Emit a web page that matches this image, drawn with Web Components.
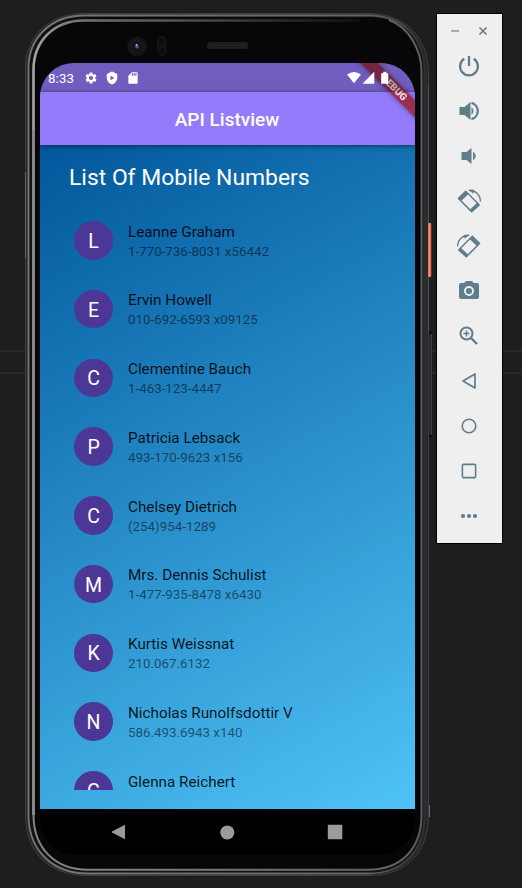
<!DOCTYPE html>
<html lang="en">
<head>
<meta charset="utf-8">
<title>API Listview</title>
<style>
html,body{margin:0;height:100%;overflow:hidden;background:#1e1e1e;font-family:Roboto,"Noto Sans",sans-serif}
</style>
</head>
<body>
<emulator-desktop>
  <phone-device>
    <status-bar></status-bar>
    <app-bar>API Listview</app-bar>
    <contact-list heading="List Of Mobile Numbers">
      <contact-tile name="Leanne Graham" phone="1-770-736-8031 x56442"></contact-tile>
      <contact-tile name="Ervin Howell" phone="010-692-6593 x09125"></contact-tile>
      <contact-tile name="Clementine Bauch" phone="1-463-123-4447"></contact-tile>
      <contact-tile name="Patricia Lebsack" phone="493-170-9623 x156"></contact-tile>
      <contact-tile name="Chelsey Dietrich" phone="(254)954-1289"></contact-tile>
      <contact-tile name="Mrs. Dennis Schulist" phone="1-477-935-8478 x6430"></contact-tile>
      <contact-tile name="Kurtis Weissnat" phone="210.067.6132"></contact-tile>
      <contact-tile name="Nicholas Runolfsdottir V" phone="586.493.6943 x140"></contact-tile>
      <contact-tile name="Glenna Reichert" phone=""></contact-tile>
    </contact-list>
    <nav-bar></nav-bar>
    <debug-banner slot="banner">DEBUG</debug-banner>
  </phone-device>
  <emulator-toolbar></emulator-toolbar>
</emulator-desktop>
<script>
const define = (tag, render) => customElements.define(tag, class extends HTMLElement {
  constructor(){ super(); this.attachShadow({mode:'open'}); }
  connectedCallback(){ this.shadowRoot.innerHTML = render(this); }
});

define('emulator-desktop', () => `
<style>
:host{display:flex;align-items:flex-start;box-sizing:border-box;width:522px;height:888px;padding:13px 0 0 25px;gap:5px;
background:linear-gradient(#292929,#292929) 0 350px/100% 2px no-repeat,linear-gradient(#292929,#292929) 0 372px/100% 2px no-repeat,#1e1e1e}
</style><slot></slot>`);

define('phone-device', () => `
<style>
:host{display:block;position:relative;width:406px;height:864px;box-sizing:border-box;padding:50px 16px 0 15px;flex:none}
.frame{position:absolute;left:0;top:0;width:408px;height:864px}
.screen{position:relative;display:flex;flex-direction:column;width:375px;height:792px;border-radius:34px 34px 36px 36px;overflow:hidden;background:linear-gradient(#947bfb 60px,#000 60px)}
</style>
<svg class="frame" viewBox="25 13 408 864">
<defs>
<linearGradient id="m" x1="0" y1="0" x2="1" y2="0"><stop offset="0" stop-color="#858585"/><stop offset=".5" stop-color="#777"/><stop offset="1" stop-color="#5c5c5e"/></linearGradient>
<linearGradient id="e" x1="0" y1="0" x2="1" y2="0"><stop offset="0" stop-color="#77757b"/><stop offset=".85" stop-color="#66646a"/><stop offset="1" stop-color="#303033"/></linearGradient>
<linearGradient id="t" x1="0" y1="0" x2="1" y2="0"><stop offset="0" stop-color="#a5a5a0"/><stop offset=".12" stop-color="#777"/><stop offset=".9" stop-color="#1c1c1c"/><stop offset="1" stop-color="#111"/></linearGradient>
<linearGradient id="o" x1="0" y1="0" x2="1" y2="0"><stop offset="0" stop-color="#e96f52"/><stop offset=".5" stop-color="#f58b70"/><stop offset="1" stop-color="#c75a43"/></linearGradient>
<radialGradient id="lens"><stop offset="0" stop-color="#7884b5"/><stop offset=".3" stop-color="#252b46"/><stop offset=".55" stop-color="#0d0d10"/><stop offset="1" stop-color="#1b1b1b"/></radialGradient>
</defs>
<path d="M427 331h5v106h-5z" fill="#282828"/><path d="M428 331h4v3h-4zM428 434h4v3h-4z" fill="#111"/><path d="M431.500 334v101" stroke="#404040"/>
<path d="M83 13.500H370C407 14 428.500 39 428.500 73V816C428.500 851 407 875.500 370 875.500H87C49 875.500 25.500 852 25.500 816V67C25.500 37 49 13.500 83 13.500Z" fill="#272727" stroke="#3d3d3d"/>
<path d="M84 15.500H370C405 16 424.500 39 424.500 73V815C424.500 849 405 873.500 368 873.500H88C51 873.500 28.500 849 28.500 815V68C28.500 38 51 15.500 84 15.500Z" fill="#121212" stroke="url(#e)" stroke-width="1.800"/>
<path d="M84 17.500H369C403 18 421.500 40 421.500 72V815C421.500 848 403 870 367 870H88C53 870 33 848 33 815V69C33 40 54 20 84 20H369C401 20 421.500 40 421.500 72" fill="#07070a"/>
<path d="M33.500 815V70C33.500 41 54 20.500 84 20.500H360" fill="none" stroke="url(#t)" stroke-width="2.600"/>
<path d="M33.500 130V815C33.500 847 54 869.700 88 869.700H368C402 869.700 421.500 848 421.500 815V72C421.500 50 409 27 389 20" fill="none" stroke="url(#m)" stroke-width="2"/>
<path d="M425.500 75V815" stroke="#2b2c2e" stroke-width="4"/>
<path d="M25.500 172v86" stroke="#686868"/><path d="M428.500 86v137M428.500 277v53" stroke="#555"/><path d="M429.500 805v12" stroke="#686868"/>
<rect x="428" y="223" width="3.300" height="54" rx=".8" fill="url(#o)"/>
<circle cx="137" cy="46.500" r="9.800" fill="#151515"/><circle cx="137" cy="46.500" r="6.500" fill="url(#lens)"/><circle cx="136.500" cy="44.800" r=".8" fill="#dce2f7"/>
<rect x="157" y="36" width="9.500" height="20" rx="4.700" fill="#131313"/><circle cx="161.700" cy="40.500" r="3" fill="#0c0c0c"/><circle cx="161.700" cy="51" r="3" fill="#0c0c0c"/>
<rect x="207" y="42" width="41" height="7" rx="2.500" fill="#1c1c1c"/><path d="M209 45.500h37" stroke="#232323"/>
</svg>
<div class="screen"><slot></slot><slot name="banner"></slot></div>`);

define('status-bar', () => `
<style>
:host{position:relative;z-index:4;display:flex;align-items:center;height:29px;flex:none;background:#0000003d;color:#fff;box-sizing:border-box;padding:1px 0 0 8px;font-size:13.300px}
span{width:36px;letter-spacing:.1px}.l{display:flex;gap:7px;align-items:center}.r{margin-left:auto;margin-right:24px;display:flex;align-items:center}
svg{display:block;fill:#fff}
</style>
<span>8:33</span>
<div class="l">
<svg width="14" height="14" viewBox="0 0 24 24"><path d="M19.140 12.940c.04-.3.060-.61.060-.94s-.02-.64-.07-.94l2.030-1.580a.49.490 0 0 0 .12-.61l-1.920-3.320a.49.490 0 0 0-.59-.22l-2.390.96a7 7 0 0 0-1.620-.94L14.400 2.810a.48.480 0 0 0-.48-.41h-3.840a.47.470 0 0 0-.47.410l-.36 2.540c-.59.240-1.130.57-1.620.94l-2.390-.96a.47.470 0 0 0-.59.220L2.740 8.870a.47.470 0 0 0 .12.610l2.030 1.580a6 6 0 0 0 0 1.880l-2.030 1.580a.49.490 0 0 0-.12.610l1.920 3.320c.12.220.37.290.59.220l2.390-.96c.5.380 1.030.7 1.620.94l.36 2.540c.05.240.24.410.48.410h3.840c.24 0 .44-.17.470-.41l.36-2.540c.59-.24 1.130-.56 1.620-.94l2.390.96c.22.080.47 0 .59-.22l1.920-3.320a.47.470 0 0 0-.12-.61zM12 15.600a3.600 3.600 0 1 1 0-7.200 3.600 3.600 0 0 1 0 7.200"/></svg>
<svg width="14" height="14" viewBox="0 0 24 24"><path fill-rule="evenodd" d="M12 1 3 5v6c0 5.550 3.840 10.740 9 12 5.160-1.260 9-6.450 9-12V5zM9.500 8v8l6.500-4z"/></svg>
<svg width="14" height="14" viewBox="0 0 24 24"><path d="M18 2h-8L4 8v12c0 1.100.9 2 2 2h12c1.100 0 2-.9 2-2V4c0-1.100-.9-2-2-2m-6 6h-2V4h2zm3 0h-2V4h2zm3 0h-2V4h2z"/></svg>
</div>
<div class="r">
<svg width="44" height="14" viewBox="0 0 44 14"><path d="M0 3.500Q7-1.500 14 3.500L7 12.200zM27.300 .8V12.700H15.500zM36.200 .8h3.200v1.500h1.800v10.400h-7V2.300h2z"/></svg>
</div>`);

define('app-bar', () => `
<style>:host{display:flex;align-items:center;justify-content:center;height:53px;flex:none;background:#947bfb;color:#fff;font-size:19px;font-weight:500;padding:1px 1px 0 0;box-sizing:border-box;position:relative;z-index:1;box-shadow:0 1px 5px #0008}</style><slot></slot>`);

define('contact-list', el => `
<style>
:host{display:flex;flex-direction:column;height:664px;flex:none;box-sizing:border-box;padding:18px 28px 19px 29px;background:linear-gradient(150.500deg,#01579b,#4fc3f7)}
h1{margin:0;height:43px;font-size:22.900px;line-height:29px;font-weight:400;color:#fff;white-space:nowrap}
.rows{flex:1;overflow:hidden}
</style><h1>${el.getAttribute('heading')}</h1><div class="rows"><slot></slot></div>`);

define('contact-tile', el => `
<style>
:host{display:flex;height:68.780px;align-items:center;padding-left:5.300px;gap:15.200px;box-sizing:border-box}
.avatar{width:38.500px;height:38.500px;border-radius:50%;background:#4c3796;color:#fff;display:flex;align-items:center;justify-content:center;font-size:19.500px;flex:none;line-height:1;padding-top:2.500px;box-sizing:border-box}
.text{padding-top:2.500px}
.name{font-size:15.250px;line-height:20px;color:#000000de;white-space:nowrap}
.phone{font-size:13.350px;line-height:20px;height:20px;color:#0000008a;white-space:nowrap}
</style>
<div class="avatar">${el.getAttribute('name')[0]}</div>
<div class="text"><div class="name">${el.getAttribute('name')}</div><div class="phone">${el.getAttribute('phone')}</div></div>`);

define('nav-bar', () => `
<style>:host{display:flex;align-items:center;height:46px;flex:none;background:#000;box-sizing:border-box;padding:0 72px 0 71px;justify-content:space-between}svg{display:block;fill:#9b9b9b}</style>
<svg width="15" height="16" viewBox="0 0 15 16"><path d="M14 .7v14.600L1 8.600Q0 8 1 7.400z"/></svg>
<svg width="17" height="15" viewBox="0 0 17 15"><circle cx="9.300" cy="7.500" r="7"/></svg>
<svg width="16" height="16" viewBox="0 0 16 16"><rect x=".8" y=".8" width="14.500" height="14.500" rx="1"/></svg>`);

define('debug-banner', () => `
<style>
:host{position:absolute;z-index:3;right:-29px;top:19px;width:100px;height:12px;transform:rotate(45deg);background:#9a2947f0;box-shadow:0 0 5px #0007;color:#ffffffd9;font-size:10px;font-weight:900;line-height:12.500px;text-align:center}
</style><slot></slot>`);

const rotate = '<path fill-rule="evenodd" d="M8.700 1.300 22.700 15.300q.6.600 0 1.200l-7.400 6.800q-.6.600-1.200 0L1 10q-.6-.6 0-1.300zM11 5.600 4.600 11.600 13.300 20.300 19.600 14.300z"/><path d="M11.700 1.400c6-.9 11.700 4.400 11.700 11" fill="none" stroke="currentColor" stroke-width="1.400"/><path d="m11.500 1 5.500-.2-.6 4z"/>';
define('tool-icon', el => {
  const shapes = {
    power:'<path d="M12 2v10M7.300 4.800a8.900 8.900 0 1 0 9.400 0" fill="none" stroke="currentColor" stroke-width="2.300"/>',
    louder:'<path d="M2.500 8v8h5l6 5V3L7.500 8z"/><path d="M14.500 8q4 4 0 8z"/><path d="M14.500 3.800a8.500 8.500 0 0 1 0 16.400" fill="none" stroke="currentColor" stroke-width="2.300"/>',
    quieter:'<path d="M4.500 8v8h5l5 4V4L9.500 8z"/><path d="M16 7.500q5.500 4.500 0 9z"/>',
    left:rotate,
    right:`<g transform="translate(24 0) scale(-1 1)">${rotate}</g>`,
    camera:'<path fill-rule="evenodd" d="m9 2-1.800 2H4a2 2 0 0 0-2 2v12c0 1.100.9 2 2 2h16a2 2 0 0 0 2-2V6a2 2 0 0 0-2-2h-3.200L15 2zm3 5a5 5 0 1 1 0 10 5 5 0 0 1 0-10"/><circle cx="12" cy="12" r="3.100"/>',
    zoom:'<g fill="none" stroke="currentColor"><circle cx="9.500" cy="9.500" r="6" stroke-width="2"/><path d="m14 14 6 6" stroke-width="2.400"/><path d="M9.500 6.500v6M6.500 9.500h6" stroke-width="1.400"/></g>',
    back:'<path d="M18 5v14L6 12z" fill="none" stroke="currentColor" stroke-width="1.700" stroke-linejoin="round"/>',
    home:'<circle cx="12" cy="12" r="6.800" fill="none" stroke="currentColor" stroke-width="1.600"/>',
    overview:'<rect x="5.400" y="5.400" width="13.200" height="13.200" rx="1" fill="none" stroke="currentColor" stroke-width="1.600"/>',
    more:'<circle cx="6" cy="12" r="2.100"/><circle cx="12" cy="12" r="2.100"/><circle cx="18" cy="12" r="2.100"/>'
  };
  return `<style>:host{display:flex;align-items:center;justify-content:center;width:45px;height:45px;color:#607d8b}svg{display:block;fill:currentColor}</style><svg width="24" height="24" viewBox="0 0 24 24">${shapes[el.getAttribute('kind')]}</svg>`;
});

define('emulator-toolbar', () => `
<style>
:host{display:flex;flex-direction:column;align-items:center;box-sizing:border-box;width:67px;height:531px;border:1px solid #000;padding-right:1px;background:#efefef;flex:none}
.window{height:29.500px;flex:none}
svg{display:block}
</style>
<svg class="window" width="65" viewBox="0 0 65 29.500"><path d="M14 17h8" stroke="#8fa5af" stroke-width="1.700"/><path d="m42.500 13.500 7 7m0-7-7 7" stroke="#607d8b" stroke-width="1.600"/></svg>
${['power','louder','quieter','left','right','camera','zoom','back','home','overview','more'].map(k=>`<tool-icon kind="${k}"></tool-icon>`).join('')}`);
</script>
</body>
</html>
